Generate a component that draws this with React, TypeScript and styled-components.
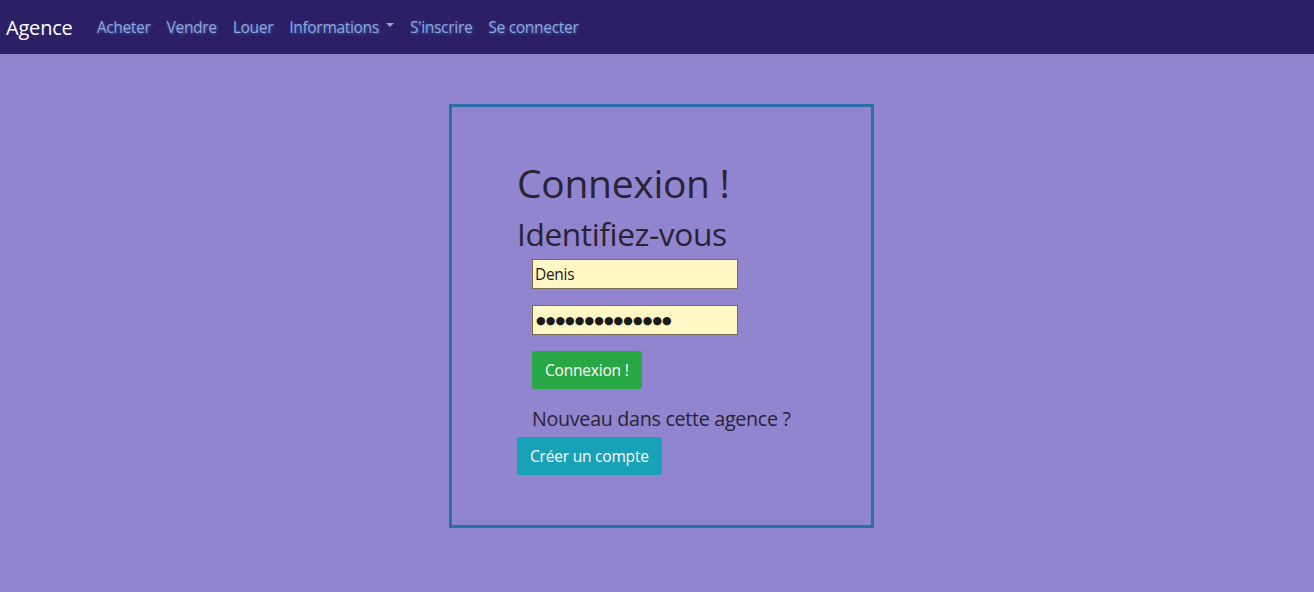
import React from "react";
import styled, { createGlobalStyle } from "styled-components";

const Global = createGlobalStyle`
  html, body { margin: 0; padding: 0; }
  body {
    background: #9085ce;
    font-family: "Open Sans", "Noto Sans", sans-serif;
    color: #2a2335;
  }
`;

const Navbar = styled.nav`
  height: 54px;
  background: #2c1f66;
  display: flex;
  align-items: center;
  padding: 0 6px;
`;

const Brand = styled.a`
  color: #ffffff;
  font-size: 20px;
  margin-right: 16px;
  text-decoration: none;
  letter-spacing: -0.2px;
`;

const NavLink = styled.a`
  color: #93a6d6;
  font-size: 15.5px;
  padding: 0 8px;
  text-decoration: none;
  text-shadow: 1px 1px 3px #3d66b8;
  letter-spacing: -0.3px;
  display: flex;
  align-items: center;
`;

const Caret = styled.span`
  display: inline-block;
  margin-left: 7px;
  border-top: 4px solid #93a6d6;
  border-left: 4px solid transparent;
  border-right: 4px solid transparent;
  transform: translateY(-2px);
`;

const Main = styled.main`
  display: flex;
  justify-content: center;
  padding-top: 50px;
`;

const Box = styled.div`
  width: 354px;
  height: 366px;
  border: 3px solid #2a6fa8;
  margin-left: 9px;
  padding: 52px 0 0 65px;
  display: flex;
  flex-direction: column;
  align-items: flex-start;
`;

const Title = styled.h1`
  margin: 0 0 8px;
  font-weight: 400;
  font-size: 39px;
  line-height: 48px;
  letter-spacing: -0.3px;
`;

const Subtitle = styled.h2`
  margin: 0;
  font-weight: 400;
  font-size: 31.7px;
  line-height: 38px;
  letter-spacing: -0.4px;
`;

const Form = styled.form`
  display: flex;
  flex-direction: column;
  align-items: flex-start;
  padding-left: 15px;
  margin-top: 6px;
  gap: 16px;
`;

const Input = styled.input<{ $dots?: boolean }>`
  width: 206px;
  height: 30px;
  box-sizing: border-box;
  background: #fff8c4;
  border: 1px solid #7b6a4e;
  font-family: ${(p) => (p.$dots ? '"DejaVu Sans", sans-serif' : '"Open Sans", sans-serif')};
  font-size: ${(p) => (p.$dots ? "11px" : "15.5px")};
  letter-spacing: ${(p) => (p.$dots ? "0.1px" : "-0.3px")};
  padding: 0 ${(p) => (p.$dots ? "3px" : "2px")};
  color: #1a1a1a;
  outline: none;
`;

const Button = styled.button<{ $color: string }>`
  background: ${(p) => p.$color};
  color: #ffffff;
  border: none;
  border-radius: 3px;
  height: 38px;
  padding: 0 13px;
  font-family: "Open Sans", sans-serif;
  font-size: 15.5px;
  letter-spacing: -0.2px;
  cursor: pointer;
`;

const Question = styled.p`
  margin: 18px 0 0 15px;
  font-size: 19.7px;
  line-height: 24px;
  letter-spacing: -0.3px;
`;

const CreateButton = styled(Button)`
  margin-top: 6px;
`;

export default function App() {
  return (
    <>
      <Global />
      <Navbar>
        <Brand href="#">Agence</Brand>
        <NavLink href="#">Acheter</NavLink>
        <NavLink href="#">Vendre</NavLink>
        <NavLink href="#">Louer</NavLink>
        <NavLink href="#">
          Informations<Caret />
        </NavLink>
        <NavLink href="#">S'inscrire</NavLink>
        <NavLink href="#">Se connecter</NavLink>
      </Navbar>
      <Main>
        <Box>
          <Title>Connexion !</Title>
          <Subtitle>Identifiez-vous</Subtitle>
          <Form onSubmit={(e) => e.preventDefault()}>
            <Input type="text" defaultValue="Denis" />
            <Input type="text" $dots defaultValue="●●●●●●●●●●●●●●" aria-label="Mot de passe" />
            <Button $color="#28a745" type="submit">Connexion !</Button>
          </Form>
          <Question>Nouveau dans cette agence ?</Question>
          <CreateButton $color="#17a2b8" type="button">Créer un compte</CreateButton>
        </Box>
      </Main>
    </>
  );
}
